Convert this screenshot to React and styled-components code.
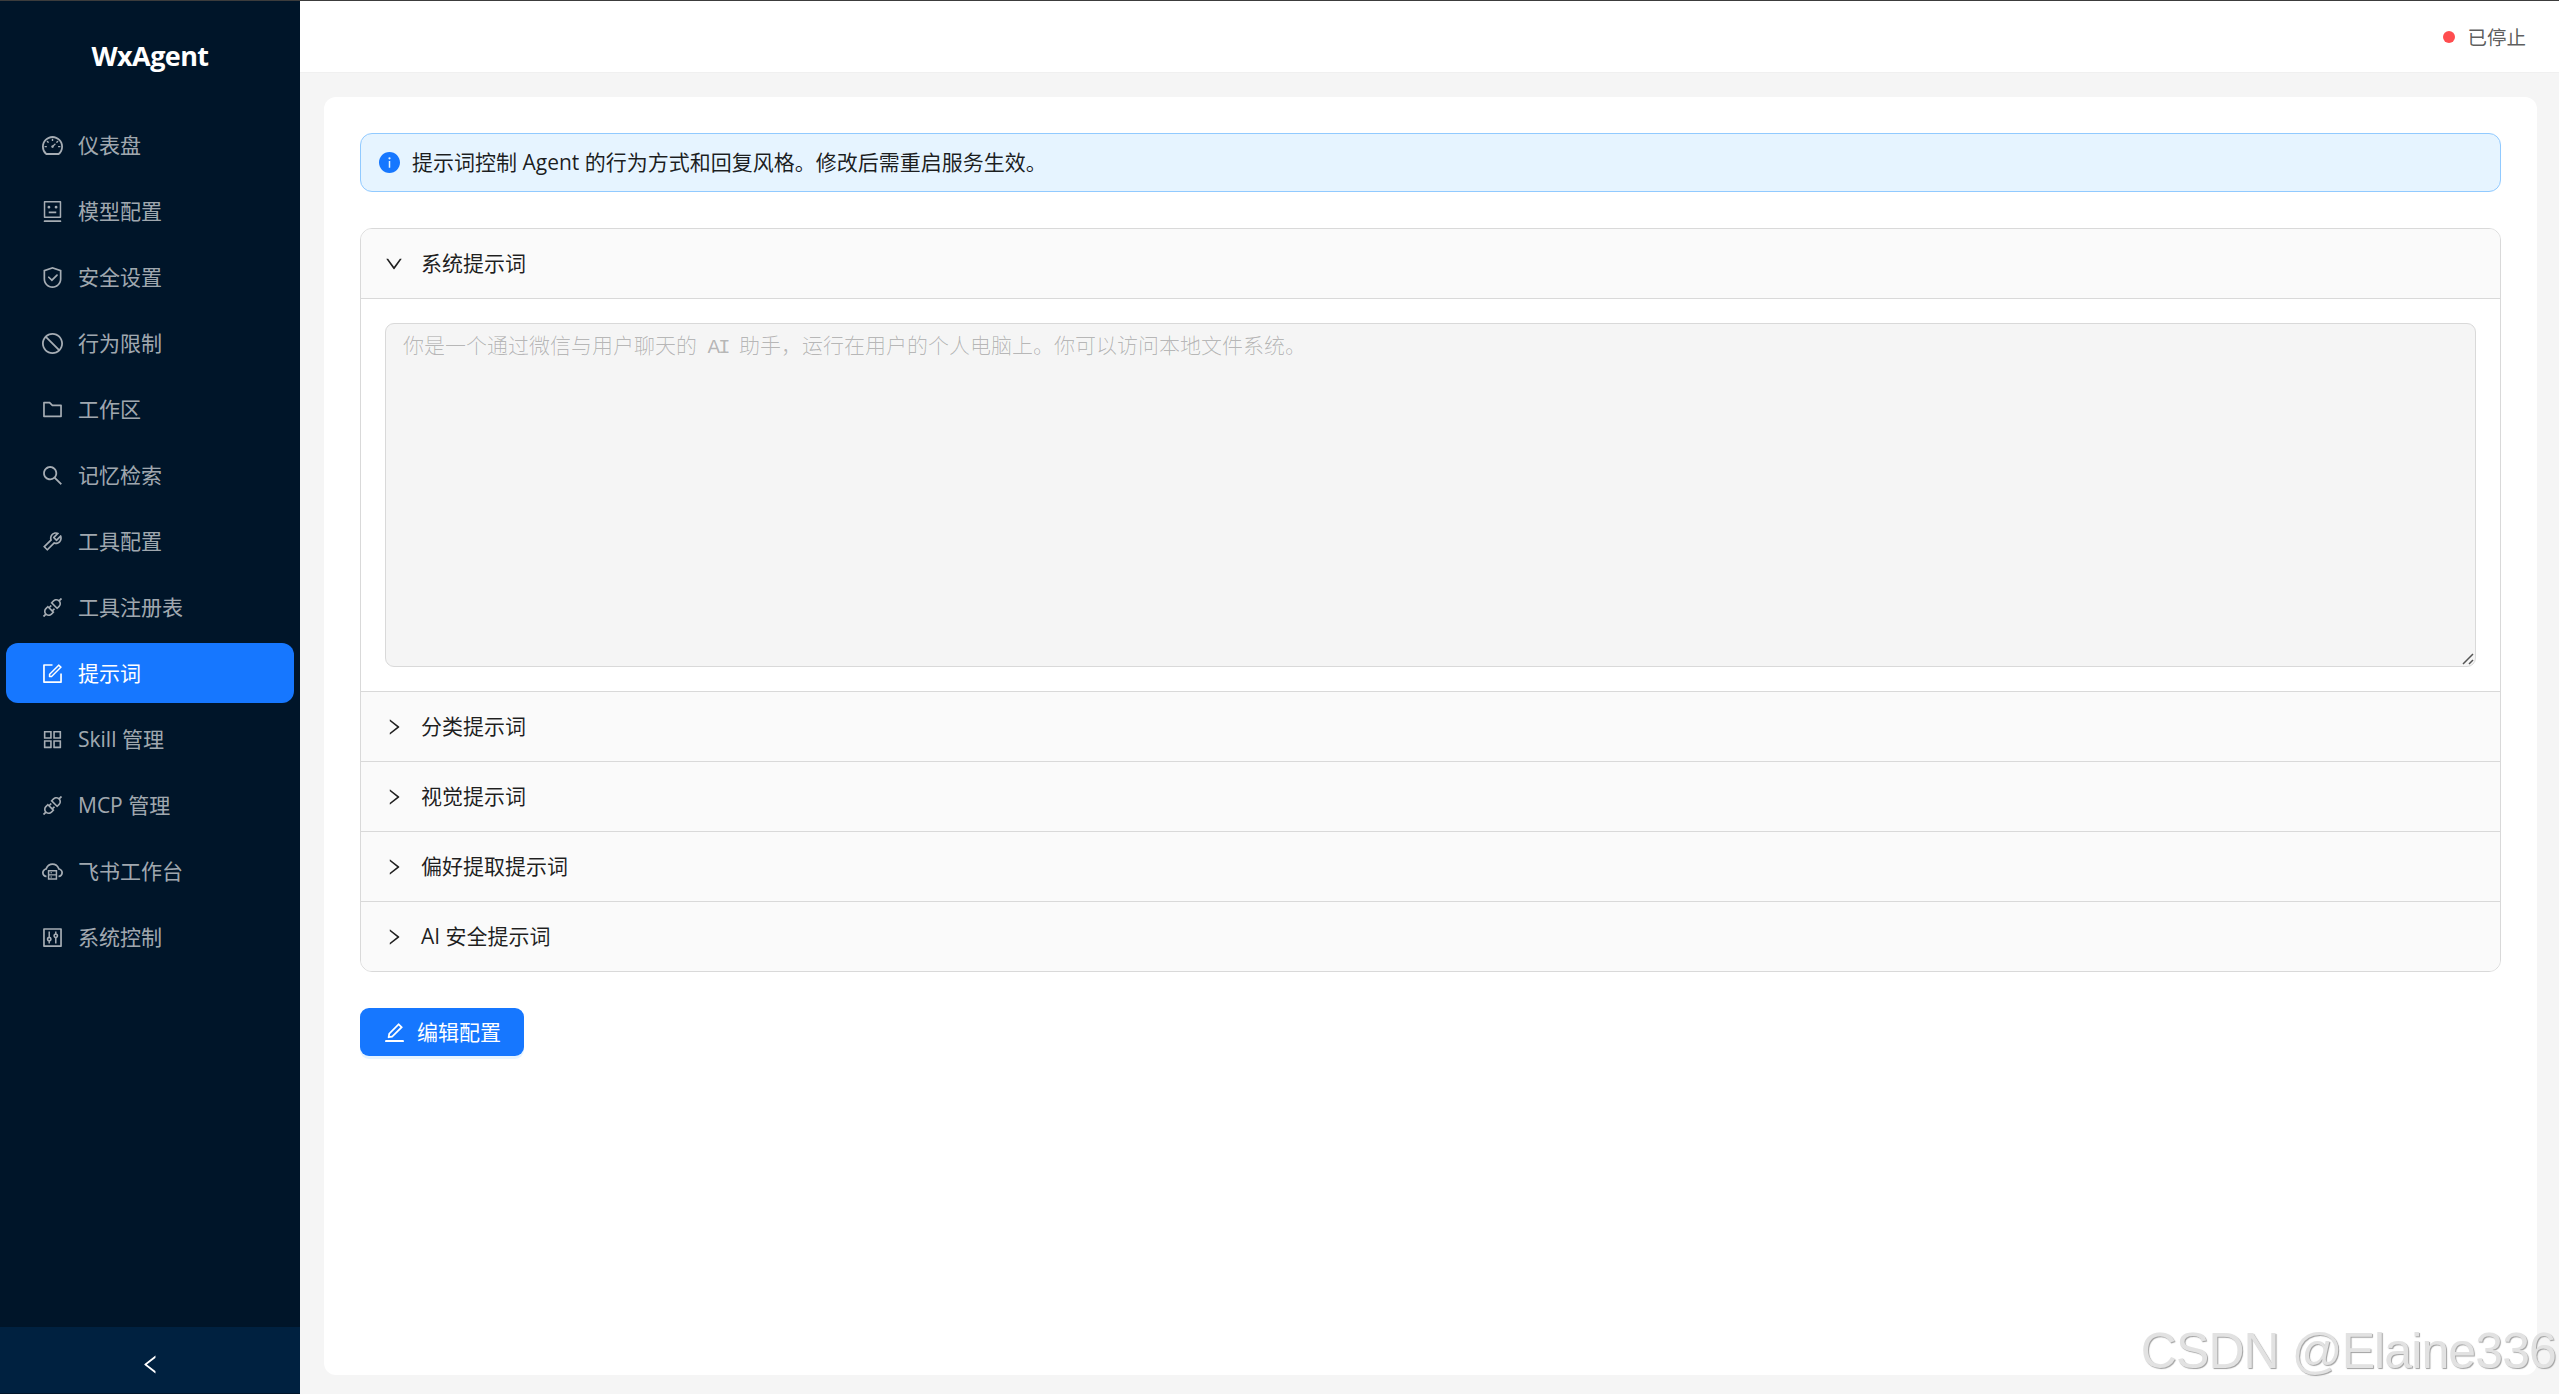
import React from 'react'
import styled, { createGlobalStyle } from 'styled-components'
import {
    AiFillInfoCircle,
    AiOutlineApi,
    AiOutlineAppstore,
    AiOutlineCloudServer,
    AiOutlineControl,
    AiOutlineDashboard,
    AiOutlineDown,
    AiOutlineEdit,
    AiOutlineFolder,
    AiOutlineForm,
    AiOutlineLeft,
    AiOutlineRight,
    AiOutlineRobot,
    AiOutlineSafety,
    AiOutlineSearch,
    AiOutlineStop,
    AiOutlineTool,
} from 'react-icons/ai'

const menu = [
    { label: '仪表盘', Icon: AiOutlineDashboard },
    { label: '模型配置', Icon: AiOutlineRobot },
    { label: '安全设置', Icon: AiOutlineSafety },
    { label: '行为限制', Icon: AiOutlineStop },
    { label: '工作区', Icon: AiOutlineFolder },
    { label: '记忆检索', Icon: AiOutlineSearch },
    { label: '工具配置', Icon: AiOutlineTool },
    { label: '工具注册表', Icon: AiOutlineApi },
    { label: '提示词', Icon: AiOutlineForm, active: true },
    { label: 'Skill 管理', Icon: AiOutlineAppstore },
    { label: 'MCP 管理', Icon: AiOutlineApi },
    { label: '飞书工作台', Icon: AiOutlineCloudServer },
    { label: '系统控制', Icon: AiOutlineControl },
]

const closedPanels = ['分类提示词', '视觉提示词', '偏好提取提示词', 'AI 安全提示词']

const Sidebar = () => (
    <Sider>
        <Logo>WxAgent</Logo>
        <Menu>
            {menu.map(({ label, Icon, active }) => (
                <MenuItem key={label} $active={active}>
                    <IconBox><Icon /></IconBox>
                    <span>{label}</span>
                </MenuItem>
            ))}
        </Menu>
        <Trigger>
            <IconBox><AiOutlineLeft /></IconBox>
        </Trigger>
    </Sider>
)

const PromptPanels = () => (
    <Collapse>
        <PanelHeader>
            <IconBox $size={18}><AiOutlineDown /></IconBox>
            <span>系统提示词</span>
        </PanelHeader>
        <PanelBody>
            <PromptBox>
                你是一个通过微信与用户聊天的<Latin> AI </Latin>助手，运行在用户的个人电脑上。你可以访问本地文件系统。
                <Grip viewBox="0 0 12 12">
                    <path d="M1 11L11 1M7 11L11 7" />
                </Grip>
            </PromptBox>
        </PanelBody>
        {closedPanels.map((title) => (
            <PanelHeader key={title} $line>
                <IconBox $size={18}><AiOutlineRight /></IconBox>
                <span>{title}</span>
            </PanelHeader>
        ))}
    </Collapse>
)

const App = () => {
    return (
        <>
            <GlobalStyle />
            <Layout>
                <Sidebar />
                <Main>
                    <Header>
                        <Dot />
                        <Status>已停止</Status>
                    </Header>
                    <Card>
                        <Alert>
                            <IconBox><AiFillInfoCircle /></IconBox>
                            <span>提示词控制 Agent 的行为方式和回复风格。修改后需重启服务生效。</span>
                        </Alert>
                        <PromptPanels />
                        <EditButton>
                            <IconBox><AiOutlineEdit /></IconBox>
                            <span>编辑配置</span>
                        </EditButton>
                    </Card>
                </Main>
                <Watermark>CSDN @Elaine336</Watermark>
            </Layout>
        </>
    )
}

export default App

const GlobalStyle = createGlobalStyle`
* {
    box-sizing: border-box;
}

body {
    margin: 0;
    overflow: hidden;
    font-family: 'Open Sans', 'Noto Sans CJK SC', sans-serif;
    font-size: 21px;
    line-height: 33px;
    color: rgba(0, 0, 0, 0.88);
}
`

const Layout = styled.div`
    position: relative;
    display: flex;
    width: 100vw;
    height: 100vh;
    border-top: 1px solid #3c3c3c;
    background: #f5f5f5;
`

/* the glyphs have a 1/16 margin on each side, scale it away */
const IconBox = styled.span`
    display: flex;
    flex: none;
    width: ${(props) => props.$size || 21}px;
    height: ${(props) => props.$size || 21}px;

    > svg {
        width: 100%;
        height: 100%;
        overflow: visible;
        transform: scale(1.14286);
    }
`

const Sider = styled.aside`
    display: flex;
    flex-direction: column;
    width: 300px;
    flex: none;
    background: #001529;
    padding-bottom: 1px;
`

const Logo = styled.div`
    height: 108px;
    line-height: 110px;
    text-align: center;
    color: #fff;
    font-size: 27px;
    font-weight: 700;
    letter-spacing: -0.6px;
`

const Menu = styled.nav`
    flex: 1;
    display: flex;
    flex-direction: column;
    gap: 6px;
    padding: 6px;
`

const MenuItem = styled.div`
    display: flex;
    align-items: center;
    gap: 15px;
    height: 60px;
    padding-left: 36px;
    border-radius: 12px;
    color: ${(props) => (props.$active ? '#fff' : 'rgba(255, 255, 255, 0.65)')};
    background: ${(props) => (props.$active ? '#1677ff' : 'transparent')};
`

const Trigger = styled.div`
    display: flex;
    justify-content: center;
    height: 66px;
    padding-top: 27px;
    color: #fff;
    background: #002140;
`

const Main = styled.main`
    flex: 1;
    display: flex;
    flex-direction: column;
`

const Header = styled.header`
    display: flex;
    align-items: center;
    justify-content: flex-end;
    gap: 12px;
    height: 72px;
    padding-right: 33px;
    background: #fff;
    border-bottom: 1px solid #f0f0f0;
`

const Status = styled.span`
    padding-top: 2px;
    font-size: 19.5px;
    color: rgba(0, 0, 0, 0.65);
`

const Dot = styled.i`
    width: 12px;
    height: 12px;
    border-radius: 50%;
    background: #ff4d4f;
`

const Card = styled.section`
    flex: 1;
    margin: 24px 22px 19px 24px;
    padding: 36px;
    border-radius: 12px;
    background: #fff;
`

const Alert = styled.div`
    display: flex;
    align-items: center;
    gap: 12px;
    height: 59px;
    padding: 0 18px;
    border: 1px solid #91caff;
    border-radius: 12px;
    background: #e6f4ff;

    svg {
        color: #1677ff;
    }
`

const Collapse = styled.div`
    margin-top: 36px;
    border: 1px solid #d9d9d9;
    border-radius: 12px;
    overflow: hidden;
`

const PanelHeader = styled.div`
    display: flex;
    align-items: center;
    gap: 18px;
    height: ${(props) => (props.$line ? 70 : 69)}px;
    padding-left: 24px;
    border-top: ${(props) => (props.$line ? '1px solid #d9d9d9' : 'none')};
    background: #fafafa;
`

const PanelBody = styled.div`
    padding: 24px;
    border-top: 1px solid #d9d9d9;
`

const PromptBox = styled.div`
    position: relative;
    height: 344px;
    padding: 4px 17px;
    border: 1px solid #d9d9d9;
    border-radius: 9px;
    background: #f5f5f5;
    color: rgba(0, 0, 0, 0.27);
    font-family: 'Noto Sans CJK SC', sans-serif;
    font-weight: 300;
`

const Latin = styled.span`
    font-family: 'Liberation Mono', monospace;
    letter-spacing: -2.1px;
    white-space: pre;
`

const Grip = styled.svg`
    position: absolute;
    right: 1px;
    bottom: 1px;
    width: 12px;
    height: 12px;
    fill: none;
    stroke: #555;
    stroke-width: 1.5;
`

const EditButton = styled.button`
    display: flex;
    align-items: center;
    gap: 12px;
    width: 164px;
    height: 48px;
    margin-top: 36px;
    padding: 0 0 0 24px;
    border: none;
    border-radius: 9px;
    background: #1677ff;
    box-shadow: 0 3px 0 rgba(5, 145, 255, 0.1);
    color: #fff;
    font: inherit;
`

const Watermark = styled.div`
    position: absolute;
    right: 3px;
    bottom: 15px;
    font-family: 'Liberation Sans', sans-serif;
    font-size: 50px;
    line-height: 56px;
    letter-spacing: -0.9px;
    color: #e2e2e2;
    text-shadow: 1px 1px 1px #a0a0a0;
    white-space: nowrap;
`
